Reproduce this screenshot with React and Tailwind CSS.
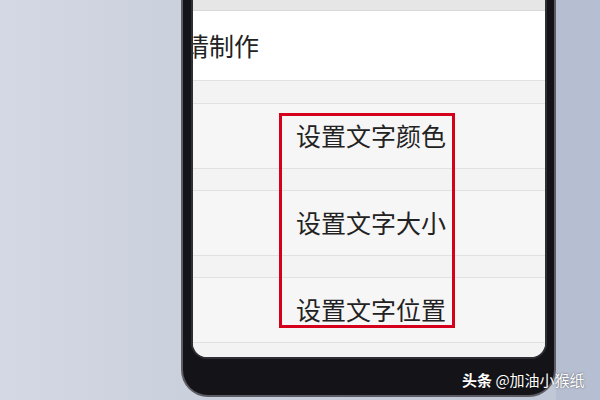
import React from "react";

const font = { fontFamily: '"Noto Sans CJK SC", "Noto Sans", sans-serif' };

function Row({ children }) {
  return (
    <div className="h-[65px] shrink-0 border-b border-[#e1e1e1] flex items-center pl-[103px] text-[25px] text-[#222222] bg-[#f6f6f6]">
      {children}
    </div>
  );
}

function Strip({ h }) {
  return <div className={`${h} shrink-0 border-b border-[#e1e1e1] bg-[#f3f3f3]`} />;
}

export default function App() {
  return (
    <div className="relative w-[600px] h-[400px] flex overflow-hidden" style={font}>
      <div className="w-[181px] h-full bg-gradient-to-r from-[#d4d8e4] to-[#cbd0dd]" />
      <div className="w-[375px] h-full bg-gradient-to-r from-[#cbd0dd] to-[#c0c7d6] shrink-0">
        <div className="h-[397px] border-x-2 border-b-2 border-[#5c5c64] bg-[#141418] rounded-b-[27px] pl-[8px] pr-[7px] pb-[36px]">
          <div className="h-[359px] border-x-2 border-b-2 border-[#2e2e34] rounded-b-[16px]">
            <div className="relative h-[357px] rounded-b-[14px] overflow-hidden bg-[#f6f6f6] flex flex-col">
              <div className="h-[11px] shrink-0 bg-[#e6e6e6] border-b border-[#d9d9d9]" />
              <div className="h-[70px] shrink-0 bg-white border-b border-[#e1e1e1] flex items-center text-[25px] text-[#222222]">
                <span className="ml-[-9px]">请制作</span>
              </div>
              <Strip h="h-[23px]" />
              <Row>设置文字颜色</Row>
              <Strip h="h-[22px]" />
              <Row>设置文字大小</Row>
              <Strip h="h-[22px]" />
              <Row>设置文字位置</Row>
              <div className="flex-1 bg-[#f3f3f3]" />
              <div className="absolute left-[86px] top-[113px] w-[176px] h-[215px] border-[3px] border-[#d4001c]" />
            </div>
          </div>
        </div>
      </div>
      <div className="flex-1 h-full bg-[#b6bed1]" />
      <div
        className="absolute left-[462px] top-[370px] text-[15px] leading-[20px] text-white whitespace-nowrap"
        style={{ textShadow: "0 0 2px rgba(0,0,0,0.6)" }}
      >
        <span className="font-bold">头条</span> @加油小猴纸
      </div>
    </div>
  );
}
